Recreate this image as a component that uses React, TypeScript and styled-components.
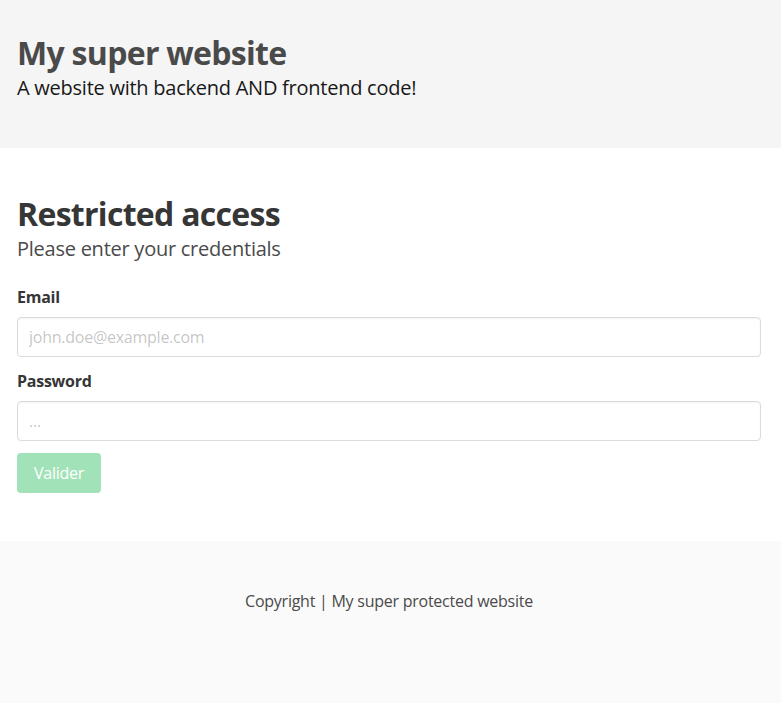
import React from 'react'
import styled, { createGlobalStyle } from 'styled-components';

const GlobalStyle = createGlobalStyle`
    html, body {
        margin: 0;
        padding: 0;
        background: white;
    }
    body {
        font-family: "Open Sans", "Noto Sans", sans-serif;
        font-size: 16px;
        line-height: 1.5;
        letter-spacing: -0.25px;
        color: #4a4a4a;
    }
    * {
        box-sizing: border-box;
    }
`

function App() {
    return (
        <>
            <GlobalStyle />
            <Hero>
                <Container>
                    <Title>My super website</Title>
                    <HeroSubtitle>A website with backend AND frontend code!</HeroSubtitle>
                </Container>
            </Hero>
            <Section>
                <Container>
                    <Title dark>Restricted access</Title>
                    <Subtitle>Please enter your credentials</Subtitle>
                    <form onSubmit={(e) => e.preventDefault()}>
                        <Field>
                            <Label htmlFor="email">Email</Label>
                            <Input id="email" type="email" placeholder="john.doe@example.com" />
                        </Field>
                        <Field>
                            <Label htmlFor="password">Password</Label>
                            <Input id="password" type="password" placeholder="..." />
                        </Field>
                        <Button type="submit" disabled>Valider</Button>
                    </form>
                </Container>
            </Section>
            <Footer>
                <FooterText>Copyright | My super protected website</FooterText>
            </Footer>
        </>
    )
}

export default App

const Container = styled.div`
    padding: 0 20px 0 17px;
`

const Hero = styled.section`
    background: #f5f5f5;
    padding: 35px 0 48px;
`

const Section = styled.section`
    background: white;
    padding: 48px 0;
`

const Title = styled.h1<{ dark?: boolean }>`
    margin: 0 0 24px;
    font-size: 32px;
    font-weight: 700;
    line-height: 1.125;
    letter-spacing: -0.7px;
    color: ${(p) => (p.dark ? '#363636' : '#4a4a4a')};
`

const Subtitle = styled.h2`
    margin: -20px 0 24px;
    font-size: 20px;
    font-weight: 400;
    line-height: 1.25;
    color: #4a4a4a;
`

const HeroSubtitle = styled(Subtitle)`
    margin-bottom: 0;
    color: #181818;
`

const Field = styled.div`
    margin-bottom: 12px;
`

const Label = styled.label`
    display: block;
    margin-bottom: 8px;
    font-size: 16px;
    font-weight: 700;
    color: #363636;
`

const Input = styled.input`
    display: block;
    width: 100%;
    height: 40px;
    padding: 7px 11px;
    font-family: inherit;
    font-size: 16px;
    letter-spacing: inherit;
    color: #363636;
    background: white;
    border: 1px solid #dbdbdb;
    border-radius: 4px;
    box-shadow: inset 0 1px 2px rgba(10, 10, 10, 0.05);
    outline: none;
    &::placeholder {
        color: rgba(54, 54, 54, 0.3);
    }
`

const Button = styled.button`
    height: 40px;
    padding: 0 16px;
    font-family: inherit;
    font-size: 16px;
    letter-spacing: inherit;
    color: white;
    background: #48c774;
    border: 1px solid transparent;
    border-radius: 4px;
    opacity: 0.5;
    cursor: not-allowed;
`

const Footer = styled.footer`
    background: #fafafa;
    padding: 48px 20px 96px 17px;
`

const FooterText = styled.p`
    margin: 0;
    text-align: center;
    color: #4a4a4a;
`
